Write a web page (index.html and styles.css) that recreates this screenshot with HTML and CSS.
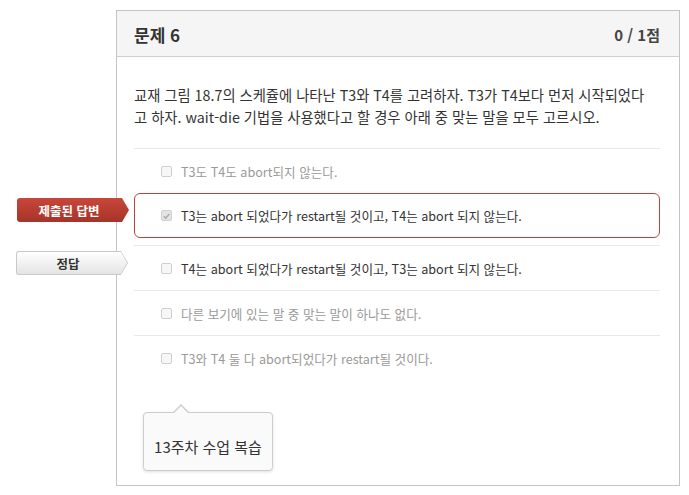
FILE: index.html
```html
<!DOCTYPE html>
<html lang="ko">
<head>
<meta charset="utf-8">
<link rel="stylesheet" href="styles.css">
</head>
<body>
<div class="page">
  <section class="card">
    <header class="card-head">
      <h2 class="title">문제 6</h2>
      <span class="score">0 / 1점</span>
    </header>
    <div class="card-body">
      <p class="question">교재 그림 18.7의 스케쥴에 나타난 T3와 T4를 고려하자. T3가 T4보다 먼저 시작되었다고 하자. wait-die 기법을 사용했다고 할 경우 아래 중 맞는 말을 모두 고르시오.</p>
      <ul class="options">
        <li class="option muted"><span class="box"></span><span>T3도 T4도 abort되지 않는다.</span></li>
        <li class="option selected">
          <span class="tag tag-red"><span class="tag-in">제출된 답변</span></span>
          <span class="box checked"><svg viewBox="0 0 10 10" width="10" height="10"><path d="M2 5.2 L4.2 7.4 L8.2 2.6" fill="none" stroke="#a9a9a9" stroke-width="1.6"/></svg></span><span>T3는 abort 되었다가 restart될 것이고, T4는 abort 되지 않는다.</span>
        </li>
        <li class="option">
          <span class="tag tag-gray"><span class="tag-in">정답</span></span>
          <span class="box"></span><span>T4는 abort 되었다가 restart될 것이고, T3는 abort 되지 않는다.</span>
        </li>
        <li class="option muted"><span class="box"></span><span>다른 보기에 있는 말 중 맞는 말이 하나도 없다.</span></li>
        <li class="option muted"><span class="box"></span><span>T3와 T4 둘 다 abort되었다가 restart될 것이다.</span></li>
      </ul>
      <div class="tip">13주차 수업 복습</div>
    </div>
  </section>
</div>
</body>
</html>
```

FILE: styles.css
```css
* { box-sizing: border-box; }
html, body { margin: 0; padding: 0; background: #fff; }
body {
  font-family: "Noto Sans CJK KR", "Noto Sans", sans-serif;
  color: #333;
  width: 689px;
  height: 495px;
  overflow: hidden;
}
.page { padding: 10px 9px 0 116px; }
.card {
  width: 564px;
  height: 476px;
  border: 1px solid #c4c4c4;
  background: #fff;
}
.card-head {
  height: 46px;
  background: #f5f5f5;
  border-bottom: 1px solid #cfcfcf;
  display: flex;
  align-items: center;
  justify-content: space-between;
  padding: 2px 19px 0 17px;
}
.title { margin: 0; font-size: 17px; font-weight: 700; color: #333; }
.score { font-size: 15px; font-weight: 700; color: #444; }
.card-body { padding: 27px 19px 0 17px; }
.question {
  margin: 0 0 20px;
  max-width: 516px;
  font-size: 14.3px;
  line-height: 22px;
  color: #333;
}
.options { list-style: none; margin: 0; padding: 0; }
.option {
  position: relative;
  height: 45px;
  border-top: 1px solid #e9e9e9;
  display: flex;
  align-items: center;
  padding-left: 27px;
  font-size: 12.6px;
  color: #333;
}
.option.muted { color: #9a9a9a; }
.option.selected {
  border: 1px solid #b84638;
  border-radius: 6px;
  margin-bottom: 7px;
  height: 45px;
  padding-left: 26px;
}
.option.selected + .option { border-top: 1px solid #e9e9e9; }
.box {
  width: 11px;
  height: 11px;
  border: 1px solid #cfcfcf;
  border-radius: 2px;
  background: #f7f7f7;
  margin-right: 9px;
  flex: none;
  display: flex;
  align-items: center;
  justify-content: center;
}
.box.checked { background: #e4e4e4; border-color: #d0d0d0; }
.box svg { display: block; }
.tag {
  position: absolute;
  left: -118px;
  top: 4px;
  width: 112px;
  height: 24px;
  clip-path: polygon(0 0, 105px 0, 112px 50%, 105px 100%, 0 100%);
  border-radius: 3px 0 0 3px;
}
.tag-in {
  position: absolute;
  inset: 0;
  display: flex;
  align-items: center;
  justify-content: center;
  padding-right: 8px;
  font-size: 12.5px;
  font-weight: 700;
}
.tag-red { background: linear-gradient(#c9463a, #a53428); }
.tag-red .tag-in { color: #fff; }
.tag-gray { background: #c9c9c9; top: 5px; }
.tag-gray .tag-in {
  inset: 1px;
  clip-path: polygon(0 0, 104px 0, 110px 50%, 104px 100%, 0 100%);
  background: linear-gradient(#ffffff, #e4e4e4);
  border-radius: 2px 0 0 2px;
  color: #333;
}
.tip {
  position: relative;
  margin: 32px 0 0 9px;
  width: 130px;
  height: 59px;
  border: 1px solid #cdcdcd;
  border-radius: 4px;
  background: #fafafa;
  box-shadow: 0 1px 3px rgba(0,0,0,0.12);
  font-size: 15px;
  line-height: 20px;
  color: #333;
  text-align: center;
  padding-top: 24px;
}
.tip::before, .tip::after {
  content: "";
  position: absolute;
  left: 29px;
  top: -9px;
  border-left: 8px solid transparent;
  border-right: 8px solid transparent;
  border-bottom: 8px solid #cdcdcd;
}
.tip::after {
  top: -7px;
  left: 30px;
  border-left-width: 7px;
  border-right-width: 7px;
  border-bottom: 7px solid #fafafa;
}
```
